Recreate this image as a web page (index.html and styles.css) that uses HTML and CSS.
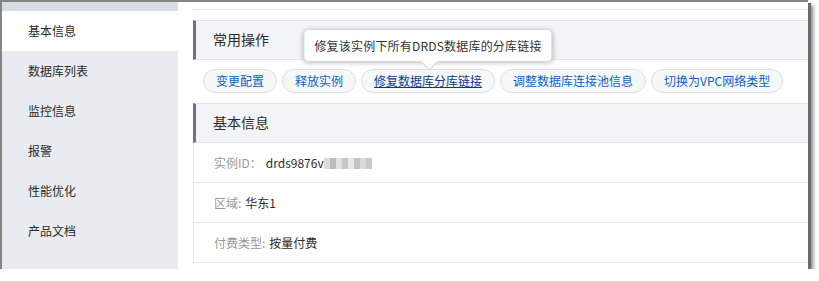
FILE: index.html
```html
<!DOCTYPE html>
<html lang="zh-CN">
<head>
  <meta charset="UTF-8" />
  <meta name="viewport" content="width=device-width, initial-scale=1.0"/>
  <title>DRDS 实例详情</title>
  <link rel="stylesheet" href="styles.css">
</head>
<body>
  <div class="window">
    <div class="sidebar">
      <div class="side-item active">基本信息</div>
      <div class="side-item">数据库列表</div>
      <div class="side-item">监控信息</div>
      <div class="side-item">报警</div>
      <div class="side-item">性能优化</div>
      <div class="side-item">产品文档</div>
    </div>

    <div class="main">
      <div class="prev-section"></div>

      <div class="section-title">常用操作</div>
      <div class="ops">
        <span class="op-btn">变更配置</span>
        <span class="op-btn">释放实例</span>
        <span class="op-btn hover">
          修复数据库分库链接
          <span class="tooltip">修复该实例下所有DRDS数据库的分库链接</span>
        </span>
        <span class="op-btn">调整数据库连接池信息</span>
        <span class="op-btn">切换为VPC网络类型</span>
      </div>

      <div class="section-title">基本信息</div>
      <div class="info-list">
        <div class="info-row"><span class="label">实例ID：</span><span class="value">drds9876v<span class="masked"></span></span></div>
        <div class="info-row"><span class="label">区域:</span><span class="value">华东1</span></div>
        <div class="info-row"><span class="label">付费类型:</span><span class="value">按量付费</span></div>
      </div>
    </div>
  </div>
</body>
</html>
```

FILE: styles.css
```css
* {
  box-sizing: border-box;
}

body {
  margin: 0;
  background: #fff;
  font-family: "Noto Sans CJK SC", "Noto Sans", sans-serif;
  color: #333;
}

.window {
  display: flex;
  width: 808px;
  height: 269px;
  border-left: 2px solid #858585;
  border-top: 2px solid #858585;
  box-shadow: 3px 3px 0 #6a6a6a, 5px 5px 4px rgba(0, 0, 0, 0.5);
  overflow: hidden;
}

.sidebar {
  width: 176px;
  background: #e8ebf0;
  border-top: 9px solid #d8dde5;
}

.side-item {
  height: 40px;
  line-height: 40px;
  padding-left: 26px;
  font-size: 12px;
  color: #2b2b2b;
}

.side-item.active {
  background: #fff;
}

.main {
  flex: 1;
  background: #fff;
  padding-left: 15px;
}

.prev-section {
  height: 8px;
  border-bottom: 1px solid #e2e4e8;
  margin-bottom: 10px;
}

.section-title {
  height: 40px;
  line-height: 37px;
  background: #f2f4f8;
  border-top: 1px solid #e3e6eb;
  border-bottom: 1px solid #e3e6eb;
  border-left: 3px solid #6c7583;
  padding-left: 17px;
  font-size: 14px;
  color: #2b2b2b;
}

.ops {
  display: flex;
  gap: 5px;
  padding: 9px 10px 10px;
}

.op-btn {
  position: relative;
  height: 24px;
  line-height: 22px;
  padding: 0 12px;
  border: 1px solid #dcdfe4;
  border-radius: 12px;
  background: #f6f7f9;
  color: #0a62c8;
  font-size: 12px;
  white-space: nowrap;
}

.op-btn.hover {
  color: #0b3b8f;
  text-decoration: underline;
}

.tooltip {
  position: absolute;
  left: 50%;
  bottom: 30px;
  transform: translateX(-50%);
  height: 33px;
  line-height: 32px;
  padding: 0 10px;
  background: #fff;
  border: 1px solid #d6d6d6;
  border-radius: 5px;
  box-shadow: 0 1px 5px rgba(0, 0, 0, 0.25);
  color: #333;
  font-size: 12px;
  letter-spacing: 0.2px;
  text-decoration: none;
  display: inline-block;
}

.tooltip::after {
  content: "";
  position: absolute;
  left: 50%;
  bottom: -7px;
  width: 11px;
  height: 11px;
  margin-left: -5px;
  background: #fff;
  border-right: 1px solid #d6d6d6;
  border-bottom: 1px solid #d6d6d6;
  transform: rotate(45deg);
}

.info-list {
  border-left: 1px solid #e6e6e6;
}

.info-row {
  height: 40px;
  line-height: 39px;
  padding-left: 20px;
  border-bottom: 1px solid #e8e8e8;
  font-size: 12px;
}

.label {
  color: #999;
  margin-right: 4px;
}

.value {
  color: #2b2b2b;
}

.masked {
  display: inline-block;
  width: 48px;
  height: 11px;
  vertical-align: -1px;
  background:
    linear-gradient(90deg, #dcdcdc 0 6px, #bdbdbd 6px 12px, #e2e2e2 12px 18px, #c6c6c6 18px 24px, #e6e6e6 24px 30px, #c2c2c2 30px 36px, #dadada 36px 42px, #c9c9c9 42px);
}
```
